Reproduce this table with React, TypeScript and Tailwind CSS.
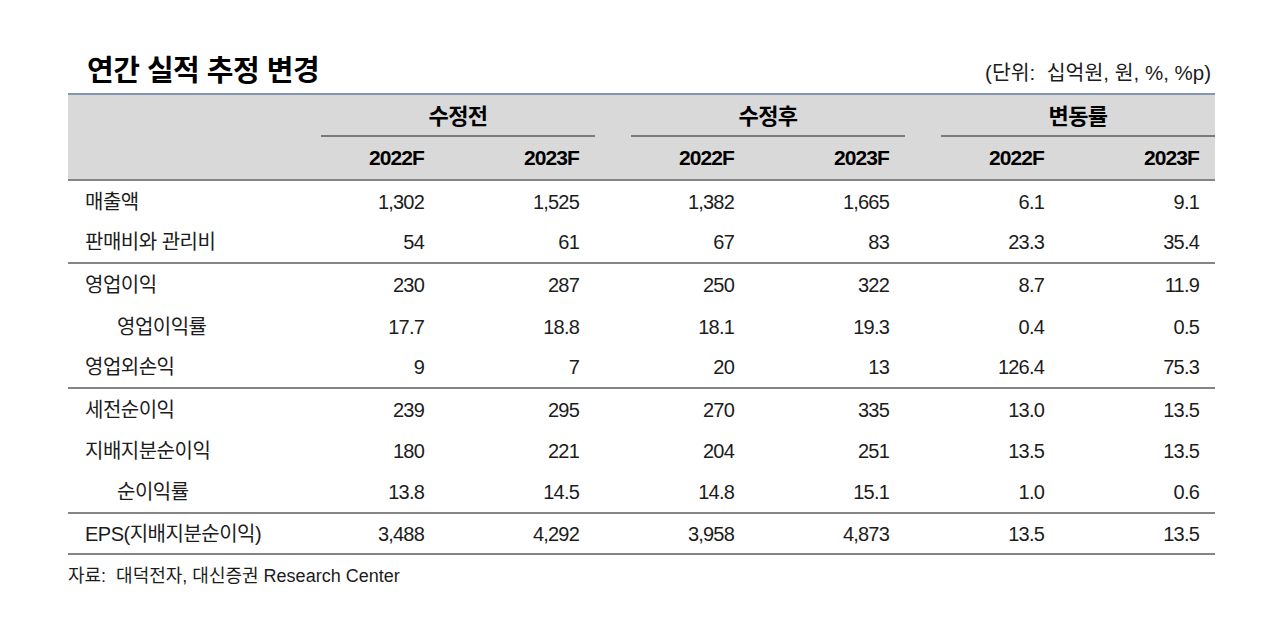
const font = { fontFamily: '"Liberation Sans", "Noto Sans CJK KR", sans-serif' };

type Row = {
  label: string;
  values: string[];
  indent?: boolean;
  border?: boolean;
};

const rows: Row[] = [
  { label: "매출액", values: ["1,302", "1,525", "1,382", "1,665", "6.1", "9.1"] },
  { label: "판매비와 관리비", values: ["54", "61", "67", "83", "23.3", "35.4"], border: true },
  { label: "영업이익", values: ["230", "287", "250", "322", "8.7", "11.9"] },
  { label: "영업이익률", values: ["17.7", "18.8", "18.1", "19.3", "0.4", "0.5"], indent: true },
  { label: "영업외손익", values: ["9", "7", "20", "13", "126.4", "75.3"], border: true },
  { label: "세전순이익", values: ["239", "295", "270", "335", "13.0", "13.5"] },
  { label: "지배지분순이익", values: ["180", "221", "204", "251", "13.5", "13.5"] },
  { label: "순이익률", values: ["13.8", "14.5", "14.8", "15.1", "1.0", "0.6"], indent: true, border: true },
  { label: "EPS(지배지분순이익)", values: ["3,488", "4,292", "3,958", "4,873", "13.5", "13.5"], border: true },
];

const groups = ["수정전", "수정후", "변동률"];
const years = ["2022F", "2023F", "2022F", "2023F", "2022F", "2023F"];

export default function App() {
  return (
    <div className="w-[1280px] h-[642px] bg-white text-[#1c1c1c]" style={font}>
      <div className="ml-[68px] w-[1147px]">
        <div className="h-[93px] flex items-end justify-between pb-[6px]">
          <h1 className="pl-[19px] text-[29px] font-bold tracking-[-0.5px] text-black leading-none pb-[1px]">
            연간 실적 추정 변경
          </h1>
          <span className="text-[20.5px] tracking-[0px] leading-none pr-[4px] pb-[4px] whitespace-pre">
            (단위:  십억원, 원, %, %p)
          </span>
        </div>

        <div className="border-t-2 border-[#8497b0] bg-[#d9d9d9] border-b-2 border-b-[#858585]">
          <div className="flex h-[42px]">
            <div className="w-[217px]" />
            {groups.map((g) => (
              <div key={g} className="w-[310px] pl-[36px] flex">
                <div className="flex-1 border-b-2 border-[#7a7a7a] flex items-center justify-center pt-[2px] text-[22px] font-bold tracking-[-0.6px] text-black">
                  {g}
                </div>
              </div>
            ))}
          </div>
          <div className="flex h-[42px]">
            <div className="w-[217px]" />
            {years.map((y, i) => (
              <div
                key={i}
                className="w-[155px] pr-[16px] flex items-center justify-end text-[21px] font-bold tracking-[-0.9px] text-black"
              >
                {y}
              </div>
            ))}
          </div>
        </div>

        {rows.map((r) => (
          <div
            key={r.label}
            className={`flex h-[41.6px] items-center text-[20px] ${r.border ? "border-b-2 border-[#858585]" : ""}`}
          >
            <div
              className={`w-[217px] tracking-[-0.5px] ${r.indent ? "pl-[49px]" : "pl-[17px]"}`}
            >
              {r.label}
            </div>
            {r.values.map((v, i) => (
              <div key={i} className="w-[155px] pr-[16px] text-right tracking-[-0.8px]">
                {v}
              </div>
            ))}
          </div>
        ))}

        <div className="pt-[8px] text-[18px] tracking-[0px] whitespace-pre">
          자료:  대덕전자, 대신증권 Research Center
        </div>
      </div>
    </div>
  );
}
